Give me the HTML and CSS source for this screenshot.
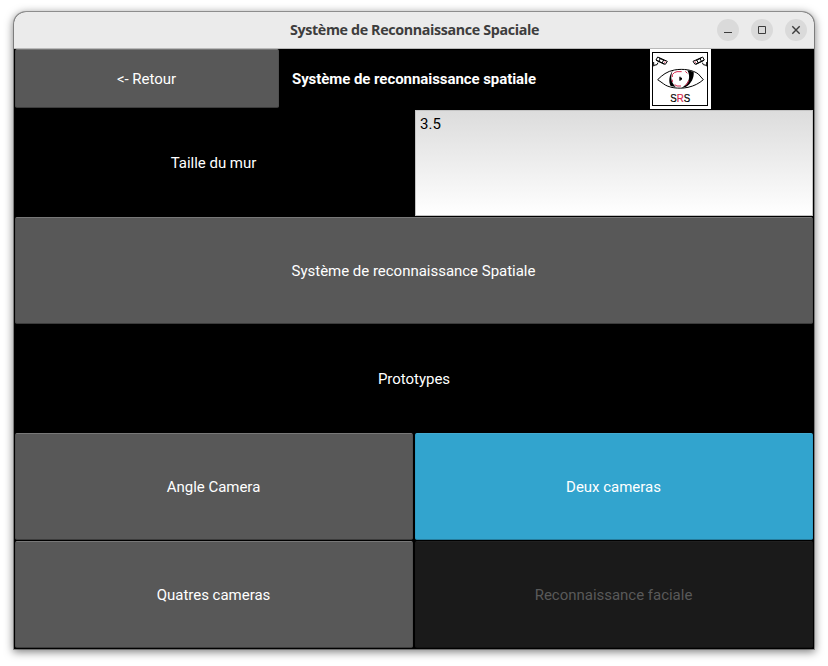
FILE: index.html
```html
<!DOCTYPE html>
<html lang="fr">
<head>
<meta charset="utf-8">
<title>Système de Reconnaissance Spaciale</title>
<link rel="stylesheet" href="styles.css">
</head>
<body>
<main class="window">
  <header class="titlebar">
    <span class="spacer"></span>
    <h1>Système de Reconnaissance Spaciale</h1>
    <div class="controls">
      <svg viewBox="0 0 22 22"><path d="M7 13.5h8"/></svg>
      <svg viewBox="0 0 22 22"><path d="M7.500 7.500h7v7h-7z"/></svg>
      <svg viewBox="0 0 22 22"><path class="cross" d="M7.300 7.300l7.400 7.400M14.700 7.300l-7.400 7.400"/></svg>
    </div>
  </header>
  <div class="top">
    <div class="cell"><button class="button">&lt;- Retour</button></div>
    <div class="label strong">Système de reconnaissance spatiale</div>
    <div class="logo">
      <svg viewBox="31 27 183 180">
        <path class="paper" d="M30 25h185v183H30z"/>
        <path class="frame" shape-rendering="crispEdges" d="M39.500 36.500h163v159h-163z"/>
        <g class="ink">
          <path d="M49 60l5-9 29 13-6 9zM50 61l24 12M58 54l17 8M62 56l-5 9M72 60l-5 9M42 66v13M43 76l9-2 3-6"/>
          <path d="M194 60l-5-9-29 13 6 9zM193 61l-24 12M185 54l-17 8M181 56l5 9M171 60l5 9M201 66v13M200 76l-9-2-3-6"/>
          <path d="M54 119C68 105 82 94 104 90c28-5 56 0 72 12l15 17c-12 11-28 19-46 23-28 6-60 1-74-11z"/>
        </g>
        <path class="fill" d="M100 91c-7 14-9 34 8 50l-15-3c-7-12-5-32 7-47zM143 91l19 4c2 18-7 36-24 46l-12 3c22-14 28-32 17-53z"/>
        <path class="fill" d="M119 110h4v3h4v6h-4v3h-4z"/>
        <path class="red" d="M98 111v-7l6-6 8-3h14M98 119v7M105 134l7 4h12M147 122l-4 9-6 5M137 94l6 6M74 68l4-3M169 68l-4-3"/>
        <text x="92" y="185" textLength="60" lengthAdjust="spacingAndGlyphs">S<tspan>R</tspan>S</text>
      </svg>
    </div>
  </div>
  <div class="row">
    <div class="label">Taille du mur</div>
    <div class="cell"><textarea class="field" spellcheck="false">3.5</textarea></div>
  </div>
  <div class="row">
    <div class="cell"><button class="button">Système de reconnaissance Spatiale</button></div>
  </div>
  <div class="row">
    <div class="label">Prototypes</div>
  </div>
  <div class="row">
    <div class="cell"><button class="button">Angle Camera</button></div>
    <div class="cell"><button class="button active">Deux cameras</button></div>
  </div>
  <div class="row">
    <div class="cell"><button class="button">Quatres cameras</button></div>
    <div class="cell"><button class="button disabled" disabled>Reconnaissance faciale</button></div>
  </div>
</main>
</body>
</html>
```
FILE: styles.css
```css
* { box-sizing: border-box; }

body {
  margin: 0;
  padding: 12px 14px 17px;
  background: #fff;
  font: 15px/18px Roboto, sans-serif;
  letter-spacing: -.02px;
}

.window {
  width: 800px;
  height: 637px;
  background: #000;
  border-radius: 12px 12px 0 0;
  box-shadow: 0 0 0 1px rgba(0, 0, 0, .32), 0 2px 9px 1px rgba(0, 0, 0, .5);
}

.titlebar {
  height: 37px;
  display: grid;
  grid-template-columns: 1fr auto 1fr;
  align-items: center;
  background: #ebebeb;
  border-bottom: 1px solid #b9b9b9;
  border-radius: 12px 12px 0 0;
}

.titlebar h1 {
  margin: 0;
  padding-left: 1px;
  width: 250px;
  text-align: center;
  font: bold 14.3px/18px "Open Sans", sans-serif;
  letter-spacing: -.37px;
  color: #3d3d3d;
  white-space: nowrap;
}

.controls {
  display: flex;
  justify-content: flex-end;
  gap: 12px;
  padding-right: 7px;
}

.controls svg {
  width: 22px;
  height: 22px;
  border-radius: 50%;
  background: #dadada;
  fill: none;
  stroke: #3d3d3d;
  stroke-width: 1;
}

.controls .cross { stroke-width: 1.4; }

.top {
  height: 60px;
  display: grid;
  grid-template-columns: repeat(3, 1fr);
}

.row {
  height: 108px;
  display: flex;
}

.row > * {
  flex: 1 1 0;
  min-width: 0;
}

.cell {
  padding: 0 1px 1px;
  display: flex;
}

.top .cell { padding: 0 1.67px 1px 1px; }

.button {
  flex: 1;
  border: 1px solid #505050;
  border-top-color: #787878;
  border-bottom-color: #3c3c3c;
  border-radius: 2px;
  background: #585858;
  color: #fff;
  font: inherit;
  letter-spacing: inherit;
  padding: 1px 1px 0 0;
}

.active {
  background: #32a4ce;
  border-color: #43abd1 #2f9bc4 #267c9c #2f9bc4;
}

.disabled {
  background: #1a1a1a;
  border-color: #202020 #191919 #121212;
  color: #595959;
}

.label {
  display: flex;
  align-items: center;
  justify-content: center;
  color: #fff;
}

.strong {
  font-weight: bold;
  letter-spacing: -.06px;
  white-space: nowrap;
}

.logo {
  display: flex;
  justify-content: center;
}

.logo svg { width: 61px; height: 60px; }
.logo .paper { fill: #fff; }
.logo .frame { fill: none; stroke: #000; stroke-width: 3; }
.logo .ink { fill: none; stroke: #000; stroke-width: 3; }
.logo .fill { fill: #000; }
.logo .red { fill: none; stroke: #d5264c; stroke-width: 3; }
.logo text {
  font: 31px "Liberation Sans", sans-serif;
  letter-spacing: 0;
  stroke: #000;
  stroke-width: .6;
}
.logo tspan { fill: #d5264c; stroke: #d5264c; }

.field {
  flex: 1;
  min-width: 0;
  margin: 1px 0 0 1px;
  padding: 4px;
  border: 1px solid #c4c4c4;
  border-radius: 0;
  outline: 0;
  resize: none;
  background: linear-gradient(#dcdcdc, #fff);
  font: inherit;
  color: #000;
}
```
